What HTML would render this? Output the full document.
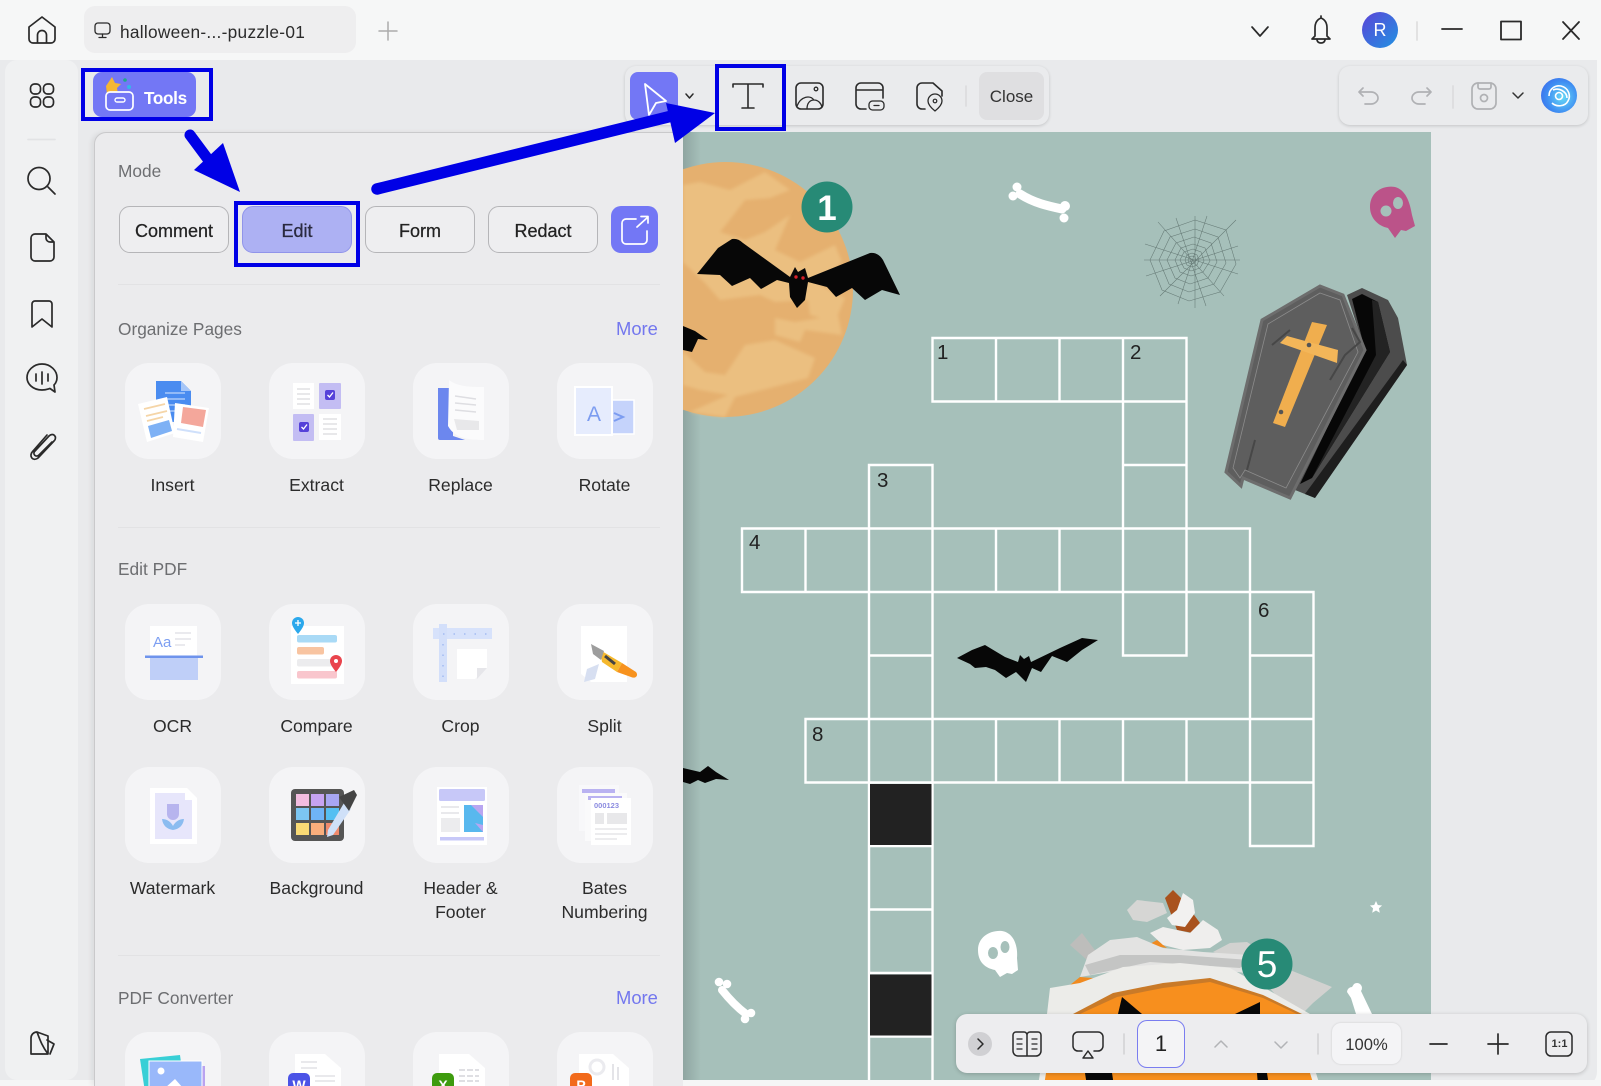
<!DOCTYPE html>
<html lang="en"><head><meta charset="utf-8"><title>Halloween puzzle</title>
<style>
html,body{margin:0;padding:0;background:#f6f7f7;width:1601px;height:1086px;overflow:hidden}
#r{position:absolute;left:0;top:0;width:1601px;height:1086px;overflow:hidden;font-family:"Liberation Sans",sans-serif;color:#222}
.a{position:absolute}
svg.a{overflow:visible}
.ic{fill:none;stroke:#2a2a2a;stroke-width:1.7;stroke-linecap:round;stroke-linejoin:round}
.btn{position:absolute;top:206px;width:110px;height:47px;box-sizing:border-box;border:1.5px solid #b5b5b8;border-radius:11px;text-align:center;line-height:48px;font-size:18px;color:#222;background:#eeeef0;-webkit-text-stroke:.25px #222}
.h{position:absolute;left:118px;font-size:17.3px;color:#6d6e71;line-height:22px}
.more{position:absolute;left:616px;font-size:18.4px;color:#7377ee;line-height:22px}
.card{position:absolute;width:96px;height:96px;border-radius:24px;background:#f4f4f6}
.card svg{position:absolute;left:0;top:0;overflow:visible}
.lb{position:absolute;width:144px;text-align:center;font-size:17.6px;line-height:24px;color:#2b2b2b}
.dv{position:absolute;left:118px;width:542px;height:1px;background:#e2e2e4}
</style></head><body><div id="r">

<!-- main area -->
<div class="a" style="left:0;top:60px;width:1597px;height:1026px;background:#e9eaec;border-radius:0 0 14px 0"></div>
<div class="a" style="left:5px;top:60px;width:73px;height:1020px;background:#f0f1f2;border-radius:12px"></div>
<div class="a" style="left:0;top:1080px;width:1601px;height:6px;background:#f5f6f6"></div>

<!-- PDF page -->
<svg class="a" style="left:0;top:0" width="1601" height="1086" viewBox="0 0 1601 1086">
<defs>
<clipPath id="pg"><rect x="683" y="132" width="748" height="948"/></clipPath>
<linearGradient id="sh" x1="0" x2="1" y1="0" y2="0"><stop offset="0" stop-color="#8fa5a1"/><stop offset="1" stop-color="#a6c0ba"/></linearGradient>
<filter id="bl"><feGaussianBlur stdDeviation="1.6"/></filter>
</defs>
<g clip-path="url(#pg)">
<rect x="683" y="132" width="748" height="948" fill="#a6c0ba"/>
<rect x="683" y="132" width="18" height="948" fill="url(#sh)"/>
<!-- moon -->
<circle cx="725.5" cy="289.5" r="127.5" fill="#e5b06f"/>
<g fill="#ebbf80" filter="url(#bl)">
<path d="M683 185 L700 182 L730 190 L765 172 L790 190 L770 198 L745 200 L728 222 L720 232 L745 240 L765 232 L790 215 L775 250 L800 262 L835 245 L842 262 L820 285 L845 298 L835 322 L810 315 L808 300 L775 302 L760 295 L720 300 L705 283 L683 262Z"/>
<path d="M775 318 L795 322 L838 315 L842 335 L805 330 L800 342 L775 335Z"/>
<path d="M683 352 L705 372 L725 375 L745 345 L775 340 L815 358 L808 378 L770 388 L735 397 L725 417 L690 412 L728 395 L700 390 L683 385Z"/>
</g>
<!-- bats -->
<path d="M697 274 L718 248 L732 239 Q738 238 743 243 L790 277 L795 267 L798 272 L805 268 L808 278 L870 253 Q878 252 883 260 L900 295 L882 290 L865 300 L852 288 L836 297 L827 287 L808 282 L805 300 L797 308 L790 297 L789 283 L777 280 L761 289 L750 278 L732 286 L720 275Z" fill="#070707"/>
<circle cx="796" cy="277" r="1.7" fill="#d9202a"/><circle cx="803" cy="278" r="1.7" fill="#d9202a"/>
<path d="M683 326 L695 331 L708 340 L698 339 L692 352 L683 350Z" fill="#070707"/>
<path d="M957 658 L972 650 L985 645 L1005 657 L1018 662 L1020 655 L1024 659 L1029 656 L1031 662 L1060 648 L1082 638 L1098 640 L1082 650 L1067 662 L1052 656 L1041 672 L1032 668 L1026 682 L1016 672 L1006 678 L995 670 L986 667 L975 668 L970 664Z" fill="#070707"/>
<path d="M683 768 L700 772 L708 766 L716 772 L729 780 L716 779 L705 783 L698 780 L690 784 L683 782Z" fill="#070707"/>
<!-- crossword -->
<path fill="none" stroke="#fff" stroke-width="2.4" d="
M932.5 338h63.5v63.5h-63.5z M996 338h63.5v63.5h-63.5z M1059.5 338h63.5v63.5h-63.5z M1123 338h63.5v63.5h-63.5z
M1123 401.5h63.5v63.5h-63.5z
M869 465h63.5v63.5h-63.5z M1123 465h63.5v63.5h-63.5z
M742 528.5h63.5v63.5h-63.5z M805.5 528.5h63.5v63.5h-63.5z M869 528.5h63.5v63.5h-63.5z M932.5 528.5h63.5v63.5h-63.5z M996 528.5h63.5v63.5h-63.5z M1059.5 528.5h63.5v63.5h-63.5z M1123 528.5h63.5v63.5h-63.5z M1186.5 528.5h63.5v63.5h-63.5z
M869 592h63.5v63.5h-63.5z M1123 592h63.5v63.5h-63.5z M1250 592h63.5v63.5h-63.5z
M869 655.5h63.5v63.5h-63.5z M1250 655.5h63.5v63.5h-63.5z
M805.5 719h63.5v63.5h-63.5z M869 719h63.5v63.5h-63.5z M932.5 719h63.5v63.5h-63.5z M996 719h63.5v63.5h-63.5z M1059.5 719h63.5v63.5h-63.5z M1123 719h63.5v63.5h-63.5z M1186.5 719h63.5v63.5h-63.5z M1250 719h63.5v63.5h-63.5z
M1250 782.5h63.5v63.5h-63.5z
M869 782.5h63.5v63.5h-63.5z M869 846h63.5v63.5h-63.5z M869 909.5h63.5v63.5h-63.5z M869 973h63.5v63.5h-63.5z M869 1036.5h63.5v63.5h-63.5z"/>
<rect x="870" y="784" width="61.5" height="61" fill="#222"/>
<rect x="870" y="974.5" width="61.5" height="61" fill="#222"/>
<g font-family="Liberation Sans,sans-serif" font-size="20.5" fill="#222">
<text x="937" y="359">1</text><text x="1130" y="359">2</text><text x="877" y="487">3</text>
<text x="749" y="549">4</text><text x="1258" y="617">6</text><text x="812" y="741">8</text>
</g>
<!-- bones -->
<g fill="#fff"><path d="M1020 194 C1034 203 1048 206 1062 209" fill="none" stroke="#fff" stroke-width="9" stroke-linecap="round"/><circle cx="1017" cy="187" r="4.500"/><circle cx="1013" cy="196" r="4.500"/><circle cx="1065" cy="206" r="5"/><circle cx="1064" cy="218" r="4.500"/></g>
<g fill="#fff"><path d="M722 990 C730 1000 738 1008 746 1014" fill="none" stroke="#fff" stroke-width="8" stroke-linecap="round"/><circle cx="719" cy="982" r="4.300"/><circle cx="727" cy="984" r="4.300"/><circle cx="751" cy="1013" r="4.300"/><circle cx="745" cy="1019" r="4.300"/></g>
<path d="M1347 992 a5 5 0 0 1 5 -5 l2 -3 a5 5 0 0 1 7 7 L1372 1014 L1356 1014 L1351 998Z" fill="#fff"/>
<!-- pink skull -->
<path d="M1370 207 C1370 192 1383 185 1395 187 C1406 190 1410 203 1412 215 L1415 226 L1406 231 L1401 230 L1395 238 L1388 228 C1378 226 1370 218 1370 207Z" fill="#bb5389"/>
<ellipse cx="1386" cy="211" rx="5.500" ry="5.500" fill="#a6c0ba"/><ellipse cx="1398" cy="203" rx="5" ry="6" fill="#a6c0ba"/>
<!-- web -->
<g fill="none" stroke="#667a76" stroke-width="0.55" transform="translate(1192 260)">
<path d="M-48 0H48M3 -44V48M-34 -38L32 36M-32 36L44 -40M-47 -16L46 14M-16 -42L14 46M-46 16L46 -14M-14 44L15 -44"/>
<path d="M3 -40L34 -30L44 4L28 32L-3 41L-30 30L-42 0L-28 -29Z"/>
<path d="M3 -31L26 -23L34 3L22 24L-3 32L-23 24L-33 0L-22 -23Z"/>
<path d="M2 -23L19 -17L25 2L16 18L-2 24L-17 18L-25 0L-16 -17Z"/>
<path d="M1 -16L13 -12L18 1L11 12L-1 16L-12 12L-17 0L-11 -12Z"/>
<path d="M1 -11L9 -8L12 1L8 8L-1 11L-8 8L-12 0L-8 -8Z"/>
<path d="M0 -7L5 -5L7 0L5 5L0 7L-5 5L-7 0L-5 -5Z"/>
<path d="M0 -4L3 -3L4 0L3 3L0 4L-3 3L-4 0L-3 -3Z"/>
</g>
<!-- coffin -->
<path d="M1347 295 L1362 288 L1388 300 L1398 318 L1407 365 L1315 498 L1295 490 L1365 350Z" fill="#4c4c4c"/>
<path d="M1352 299 L1362 294 L1378 302 L1390 352 L1312 478 L1300 484 L1365 350Z" fill="#070707"/>
<path d="M1372 300 L1378 302 L1390 352 L1312 478 L1376 355Z" fill="#232323"/>
<path d="M1403 360 L1407 365 L1315 498 L1305 494Z" fill="#1e1e1e"/>
<path d="M1320 286 L1343 295 L1365 350 L1290 498 L1243 478 L1241 486 L1226 472 L1262 320Z" fill="#5e5e5e"/>
<path d="M1320 286 L1343 295 L1365 350 L1290 498 L1243 478 L1241 486 L1226 472 L1262 320Z" fill="none" stroke="#6d6d6d" stroke-width="3"/>
<path d="M1320 293 L1340 300 L1358 352 L1286 488 L1245 470 L1240 478 L1233 468 L1268 324Z" fill="none" stroke="#8c8c8c" stroke-width="0.800"/>
<path d="M1352 328 L1360 342 L1345 355 L1330 380M1290 330 L1272 345M1255 440 L1247 470" fill="none" stroke="#474747" stroke-width="2"/>
<path d="M1312 322L1327 325L1285 427L1273 423Z" fill="#f0ae4e"/>
<path d="M1287 336L1338 350L1337 363L1280 343Z" fill="#f3b659"/>
<circle cx="1309" cy="345" r="2.300" fill="#555"/><circle cx="1281" cy="412" r="2.300" fill="#555"/>
<!-- white skull + star -->
<path d="M978 950 C978 937 990 930 1002 931 C1014 933 1018 946 1017 958 L1018 970 L1012 974 L1007 973 L1000 977 L995 970 C985 968 978 962 978 950Z" fill="#fff"/>
<ellipse cx="993" cy="953" rx="5" ry="6" fill="#a6c0ba"/><ellipse cx="1005" cy="947" rx="4.500" ry="6" fill="#a6c0ba"/>
<path d="M1376 901l1.800 4 4.300.5-3.200 2.900.9 4.300-3.800-2.200-3.800 2.200.9-4.300-3.200-2.900 4.300-.5z" fill="#fff"/>
<!-- pumpkin -->
<path d="M1070 945L1082 933L1097 953L1087 960Z" fill="#bdbdbb"/>
<path d="M1213 952L1230 943L1247 942L1290 970L1332 987L1313 1003L1303 1013L1280 1000L1250 965Z" fill="#d2d2d0"/>
<path d="M1070 985L1080 977L1093 978L1080 990Z M1148 945L1157 940L1167 948Z" fill="#f08a20"/>
<path d="M1080 977L1088 955L1110 940L1137 937L1163 948L1203 952L1250 955L1262 975L1180 965L1110 972Z" fill="#e3e3e2"/>
<path d="M1085 965L1120 955L1180 955L1250 960L1240 968L1150 962L1090 975Z" fill="#c4c5c4"/>
<path d="M1047 1014L1050 988L1080 983L1123 967L1180 963L1230 968L1263 987L1310 1014Z" fill="#ecece9"/>
<path d="M1073 1014L1113 993L1163 983L1210 978L1263 995L1302 1014Z" fill="#c97a28"/>
<path d="M1080 1014L1117 997L1163 988L1210 982L1263 998L1297 1014Z" fill="#f78f1e"/>
<path d="M1118 1014L1122 997L1142 1014Z M1235 1014L1260 1002L1260 1014Z" fill="#080808"/>
<path d="M1040 1073L1316 1073L1320 1086L1038 1086Z" fill="#ecece9"/>
<path d="M1046 1073L1310 1073L1314 1086L1044 1086Z" fill="#f78f1e"/>
<path d="M1085 1073L1112 1073L1114 1086L1087 1086Z M1257 1073L1267 1073L1269 1086L1258 1086Z" fill="#080808"/>
<path d="M1127 910L1137 900L1163 903L1167 913L1147 922L1133 920Z" fill="#d6d6d4"/>
<path d="M1165 898L1173 890L1183 900L1200 923L1193 933L1177 930Z" fill="#a9521d"/>
<path d="M1183 893L1193 900L1195 913L1185 927L1172 925L1167 918L1177 910Z" fill="#f2f1f0"/>
<path d="M1150 933L1163 927L1177 930L1190 933L1203 920L1218 930L1222 940L1210 948L1183 950L1163 945Z" fill="#efeeed"/>
<!-- badges -->
<circle cx="827" cy="207" r="25.500" fill="#278a76"/>
<text x="827" y="220" text-anchor="middle" font-family="Liberation Sans,sans-serif" font-weight="bold" font-size="35" fill="#fff">1</text>
<circle cx="1267" cy="964" r="25.500" fill="#278a76"/>
<text x="1267" y="977" text-anchor="middle" font-family="Liberation Sans,sans-serif" font-size="37" fill="#fff">5</text>
</g>
</svg>

<!-- left rail icons -->
<svg class="a ic" style="left:0;top:0" width="90" height="1086">
<path d="M29 27 L42 17 L55 27 V39 a4 4 0 0 1-4 4 H33 a4 4 0 0 1-4-4 Z M37.500 43 V35 a4.500 4.500 0 0 1 9 0 V43"/>
<rect x="30.500" y="84" width="10" height="10" rx="4"/><rect x="43.500" y="84" width="10" height="10" rx="4"/><rect x="30.500" y="97" width="10" height="10" rx="4"/><rect x="43.500" y="97" width="10" height="10" rx="4"/>
<path d="M28 139.500H55" stroke="#e2e3e5"/>
<circle cx="39" cy="178.500" r="11"/><path d="M48 187L55 194"/>
<path d="M35 234H46L54 242V257a4 4 0 0 1-4 4H35a4 4 0 0 1-4-4V238a4 4 0 0 1 4-4Z M46 234V238a4 4 0 0 0 4 4H54"/>
<path d="M35 301H49a3 3 0 0 1 3 3V327L42 319L32 327V304a3 3 0 0 1 3-3Z"/>
<path d="M42 364C33 364 27 371 27 377.500C27 384 33 390 42 390C46 390 48 389 50 388.500L55 392L54 385C56 383 57 380 57 377.500C57 371 51 364 42 364Z M36 374V381M42 372V384M48 374V381"/>
<path d="M52 442L39 455C36 458 32 454 35 451L49 436C53 432 58 437 54 441L38 458C33 462 28 456 33 451L47 435"/>
<path d="M31 1054V1038a6 6 0 0 1 6-6 L48 1036 V1054 Z M37 1032 C40 1040 42 1046 48 1054 M47 1040 L54 1044 L50 1054" />
</svg>

<!-- tab -->
<div class="a" style="left:84px;top:6px;width:272px;height:47px;background:#eeeeef;border-radius:11px"></div>
<svg class="a ic" style="left:0;top:0" width="420" height="60"><rect x="95" y="23" width="15" height="11" rx="3" stroke-width="1.300"/><path d="M102.500 34V37M99 37.500H106" stroke-width="1.300"/><path d="M388 22V40M379 31H397" stroke="#acacac" stroke-width="1.500"/></svg>
<div class="a" style="left:120px;top:20px;font-size:17.3px;line-height:24px;color:#2b2b2b;white-space:nowrap;letter-spacing:.28px">halloween-...-puzzle-01</div>

<!-- title bar right -->
<svg class="a ic" style="left:1240px;top:0" width="361" height="60">
<path d="M12 27L20 36L28 27"/>
<path d="M81 16V18C76 20 75 24 75 28V36L72 39H90L87 36V28C87 24 86 20 81 18V16M77 40C78 44 84 44 85 40"/>
<path d="M177 22V40" stroke="#dedede"/>
<path d="M202 29H222" stroke-width="1.800"/>
<rect x="261" y="21.500" width="20" height="18" stroke-width="1.800"/>
<path d="M323 22L339 39M339 22L323 39" stroke-width="1.800"/>
</svg>
<div class="a" style="left:1362px;top:12px;width:36px;height:36px;border-radius:50%;background:linear-gradient(135deg,#5a44d8,#2a87e0 85%);color:#fff;text-align:center;line-height:36px;font-size:18px">R</div>

<!-- top groups -->
<div class="a" style="left:625px;top:66px;width:424px;height:59px;box-sizing:border-box;border-radius:11px;background:#eaebed;box-shadow:0 1px 3px rgba(0,0,0,.16)"></div>
<div class="a" style="left:630px;top:72px;width:48px;height:48px;border-radius:8px;background:#7377f5"></div>
<svg class="a" style="left:630px;top:72px" width="48" height="48" fill="none" stroke="#fff" stroke-width="1.800" stroke-linejoin="round"><path d="M15 12L36 29L26 31L19 43Z"/></svg>
<svg class="a ic" style="left:670px;top:60px" width="330" height="70">
<path d="M16 34L19.500 38L23 34" stroke-width="1.500"/>
<path d="M63 27V24H93V27M78 24V48M72 48H84" stroke-width="1.600"/>
<rect x="126" y="23" width="27" height="26" rx="5" stroke-width="1.600"/><circle cx="146" cy="29" r="1.800" stroke-width="1.300"/><path d="M127 46C131 36 140 35 144 40C148 40 151 43 152 47M137 49C137 43 140 40 144 40" stroke-width="1.300"/>
<path d="M186 44V28a5 5 0 0 1 5-5H208a5 5 0 0 1 5 5V38M186 30H213M186 44a5 5 0 0 0 5 5H196" stroke-width="1.600"/><rect x="199" y="41" width="15" height="9" rx="3.500" stroke-width="1.300"/><path d="M204 45.500H209" stroke-width="1.300"/>
<path d="M247 44V28a5 5 0 0 1 5-5H263L272 31V36M247 44a5 5 0 0 0 5 5H255" stroke-width="1.600"/><path d="M265 51C260 47 258 44 258 41a7 7 0 0 1 14 0C272 44 270 47 265 51Z" stroke-width="1.300"/><circle cx="265" cy="41" r="1.800" stroke-width="1.200"/>
<path d="M296 26V46" stroke="#d9d9db" stroke-width="1.500"/>
</svg>
<div class="a" style="left:979px;top:72px;width:65px;height:48px;border-radius:8px;background:#dfdfe1;text-align:center;line-height:50px;font-size:17px;color:#333">Close</div>

<div class="a" style="left:1339px;top:66px;width:249px;height:59px;border-radius:11px;background:#eaebed;box-shadow:0 1px 3px rgba(0,0,0,.16)"></div>
<svg class="a ic" style="left:1340px;top:66px;stroke:#b0b1b4" width="250" height="60">
<path d="M23 22L19 26L23 30M19 26H31C35 26 38 29 38 32C38 35 35 38 31 38H25"/>
<path d="M87 22L91 26L87 30M91 26H79C75 26 72 29 72 32C72 35 75 38 79 38H85"/>
<path d="M113 20V42" stroke="#dcdcde"/>
<rect x="132" y="17" width="24" height="26" rx="6"/><path d="M138 17V21a2 2 0 0 0 2 2H149a2 2 0 0 0 2-2V17"/><circle cx="144" cy="32" r="3.500"/>
<path d="M173 27L178 32L183 27" stroke="#333" stroke-width="1.500"/>
</svg>
<div class="a" style="left:1541px;top:78px;width:36px;height:35px;border-radius:50%;background:radial-gradient(circle at 60% 55%,#67d9f6,#3e8cf2 55%,#3a5be8)"></div>
<svg class="a" style="left:1541px;top:78px" width="36" height="36" fill="none" stroke="#fff" stroke-width="1.600"><path d="M8 18C8 10 15 7 20 8C28 10 30 18 27 23C24 29 15 29 11 25"/><path d="M12 12C18 9 26 14 26 20"/><circle cx="18" cy="18" r="3.500"/></svg>

<!-- tools button -->
<div class="a" style="left:93px;top:72px;width:103px;height:45px;border-radius:9px;background:#7377f5"></div>
<svg class="a" style="left:93px;top:72px" width="103" height="45">
<path d="M19 5L22 11L28 12L24 16L25 22H14L13 14Z" fill="#f5b733"/><circle cx="32" cy="8" r="1.800" fill="#1fa98c"/><circle cx="36" cy="15" r="2" fill="#35b7e8"/>
<rect x="13" y="20" width="27" height="18" rx="4" fill="#7377f5" stroke="#fff" stroke-width="1.700"/><rect x="22" y="26" width="10" height="4" rx="2" fill="none" stroke="#fff" stroke-width="1.400"/></svg>
<div class="a" style="left:144px;top:85px;font-size:17.2px;font-weight:bold;line-height:26px;color:#fff;letter-spacing:-.35px">Tools</div>

<!-- panel -->
<div class="a" style="left:94px;top:132px;width:589px;height:954px;box-sizing:border-box;background:#ebebed;border:1.5px solid #c9c9cb;border-bottom:none;border-right:none;border-radius:12px 0 0 0;box-shadow:-3px 0 5px rgba(0,0,0,.06)"></div>

<div class="h" style="top:160px">Mode</div>
<div class="btn" style="left:119px">Comment</div>
<div class="btn" style="left:242px;background:#adb1f3;border-color:#9094ea;color:#2a2a44">Edit</div>
<div class="btn" style="left:365px">Form</div>
<div class="btn" style="left:488px">Redact</div>
<div class="a" style="left:611px;top:206px;width:47px;height:47px;border-radius:10px;background:#7377f5"></div>
<svg class="a" style="left:611px;top:206px" width="47" height="47" fill="none" stroke="#fff" stroke-width="1.700" stroke-linecap="round" stroke-linejoin="round"><path d="M25 13H15a4 4 0 0 0-4 4V34a4 4 0 0 0 4 4H32a4 4 0 0 0 4-4V25M26 21L37 11M30 10.500H37V17"/></svg>

<div class="dv" style="top:284px"></div>
<div class="h" style="top:318px">Organize Pages</div><div class="more" style="top:318px">More</div>

<!-- row 1 -->
<div class="card" style="left:124.5px;top:363px"><svg width="96" height="96">
<path d="M31 18H56L66 28V59H31Z" fill="#4a8cf0"/><path d="M56 18V28H66Z" fill="#a6c6f8"/><path d="M40 30H60M40 36H60M40 42H60M40 48H60" stroke="#a9caf9" stroke-width="1.500"/>
<path d="M50 40L84 45L78 79L48 74Z" fill="#fff"/><path d="M58 44L81 47L78 64L56 60Z" fill="#f4a79b"/><path d="M52 66L76 70" stroke="#cfe0fb" stroke-width="2"/>
<path d="M13 41L42 34L50 70L22 79Z" fill="#fff"/><path d="M19 46L40 41M21 53L42 48M22 58L38 54" stroke="#f5d5a7" stroke-width="1.800"/><path d="M23 63L44 57L47 68L26 75Z" fill="#7eb1f5"/>
</svg></div>
<div class="card" style="left:268.5px;top:363px"><svg width="96" height="96">
<rect x="24" y="20" width="21" height="26" fill="#fff"/><path d="M28 26H41M28 31H41M28 36H41M28 41H41" stroke="#e0e0e4" stroke-width="1.400"/>
<rect x="50" y="20" width="22" height="26" rx="1" fill="#c3bdf3"/><rect x="56" y="27" width="10" height="10" rx="2" fill="#5541d9"/><path d="M58.500 32L60.500 34L64 29.500" fill="none" stroke="#fff" stroke-width="1.300"/>
<rect x="24" y="51" width="21" height="27" rx="1" fill="#c3bdf3"/><rect x="30" y="59" width="10" height="10" rx="2" fill="#5541d9"/><path d="M32.500 64L34.500 66L38 61.500" fill="none" stroke="#fff" stroke-width="1.300"/>
<rect x="50" y="51" width="22" height="26" fill="#fff"/><path d="M54 56H68M54 61H68M54 66H68M54 71H68" stroke="#e0e0e4" stroke-width="1.400"/>
</svg></div>
<div class="card" style="left:412.5px;top:363px"><svg width="96" height="96">
<path d="M25 25H40V73L52 77H27a2 2 0 0 1-2-2Z" fill="#6c87ee"/>
<path d="M36 17C45 24 58 24 71 24V77C58 77 42 76 35 63Z" fill="#fbfbfc"/>
<path d="M42 33L63 36M42 40L63 42M42 47L63 49" stroke="#dedee2" stroke-width="1.400"/><path d="M41 56L66 58V67L44 67Z" fill="#e8e8ea"/>
</svg></div>
<div class="card" style="left:556.500px;top:363px"><svg width="96" height="96">
<rect x="55" y="37" width="22" height="34" fill="#c5d3fb" stroke="#fff" stroke-width="1.500"/>
<rect x="18" y="24" width="37" height="48" fill="#e6ecfd" stroke="#fff" stroke-width="2"/>
<text x="37" y="58" text-anchor="middle" font-family="Liberation Sans,sans-serif" font-size="21" fill="#7c9cf0">A</text>
<path d="M57 50L66 54L57 58" fill="none" stroke="#7c9cf0" stroke-width="2"/>
</svg></div>
<div class="lb" style="left:100.500px;top:473px">Insert</div><div class="lb" style="left:244.500px;top:473px">Extract</div><div class="lb" style="left:388.500px;top:473px">Replace</div><div class="lb" style="left:532.500px;top:473px">Rotate</div>

<div class="dv" style="top:527px"></div>
<div class="h" style="top:558px">Edit PDF</div>

<!-- row 2 -->
<div class="card" style="left:124.5px;top:604px"><svg width="96" height="96">
<rect x="25" y="22" width="47" height="30" fill="#fff"/><text x="28" y="43" font-family="Liberation Sans,sans-serif" font-size="15" fill="#7d9ff2">Aa</text><path d="M50 29H66M50 35H66M50 41H60" stroke="#e4e4e8" stroke-width="1.400"/>
<rect x="20" y="51.500" width="58" height="2.500" fill="#6e93ec"/><rect x="25" y="54" width="48" height="22" fill="#bfcff8"/>
</svg></div>
<div class="card" style="left:268.5px;top:604px"><svg width="96" height="96">
<rect x="22" y="22" width="53" height="58" fill="#fff"/><rect x="28" y="31" width="40" height="7.500" rx="2" fill="#a9daf6"/><rect x="28" y="43" width="27" height="7.500" rx="2" fill="#f8c4a1"/><rect x="28" y="55" width="40" height="7.500" rx="2" fill="#ececee"/><rect x="28" y="67" width="40" height="7.500" rx="2" fill="#f9c6cd"/>
<path d="M29 30C24 24 23 21 23 19a6 6 0 0 1 12 0C35 21 34 24 29 30Z" fill="#2ba8ec"/><path d="M26 19H32M29 16V22" stroke="#fff" stroke-width="1.300"/>
<path d="M67 68C62 62 61 59 61 57a6 6 0 0 1 12 0C73 59 72 62 67 68Z" fill="#e9444d"/><circle cx="67" cy="57" r="2" fill="#fff"/>
</svg></div>
<div class="card" style="left:412.5px;top:604px"><svg width="96" height="96">
<rect x="20" y="24" width="59" height="11" fill="#d7e2fb"/><rect x="26" y="20" width="8" height="58" fill="#d3dffa"/>
<path d="M30 30H75M30 40V74" stroke="#8aa8ee" stroke-width="1" stroke-dasharray="1.500 9"/>
<path d="M44 45H74V64L62 75H44Z" fill="#fff"/><path d="M74 64H64V75Z" fill="#e6e6ea"/>
</svg></div>
<div class="card" style="left:556.500px;top:604px"><svg width="96" height="96">
<path d="M24 22H70V78H34L24 70Z" fill="#fff"/><path d="M27 78L30 65L42 60L38 75Z" fill="#d7dff1"/>
<path d="M43 46L65 59L60 68L45 58Z" fill="#f5b82d"/><path d="M65 59L79 68C82 72 78 75 74 73L60 68Z" fill="#f7921e"/><path d="M34 40L47 47L44 56L36 50Z" fill="#9d9d9d"/><path d="M48 52L58 60" stroke="#444" stroke-width="3"/>
</svg></div>
<div class="lb" style="left:100.500px;top:714px">OCR</div><div class="lb" style="left:244.500px;top:714px">Compare</div><div class="lb" style="left:388.500px;top:714px">Crop</div><div class="lb" style="left:532.500px;top:714px">Split</div>

<!-- row 3 -->
<div class="card" style="left:124.5px;top:767px"><svg width="96" height="96">
<path d="M25 21H62L72 31V77H25Z" fill="#fff"/><path d="M30 26H60V33H67V72H30Z" fill="#e7e6fb"/>
<path d="M42 37H54V47a6 6 0 0 1-12 0Z" fill="#b7b4ee"/><path d="M37 52C38 59 42 62 48 63C54 62 58 59 59 52C54 52 50 55 48 59C46 55 42 52 37 52Z" fill="#8bbcf0"/>
</svg></div>
<div class="card" style="left:268.5px;top:767px"><svg width="96" height="96">
<rect x="22" y="22" width="53" height="52" rx="4" fill="#555"/>
<rect x="27" y="27" width="13" height="12" fill="#f3bde0"/><rect x="42" y="27" width="13" height="12" fill="#c6a3f2"/><rect x="57" y="27" width="13" height="12" fill="#a7a6f3"/>
<rect x="27" y="41" width="13" height="12" fill="#7cc6f2"/><rect x="42" y="41" width="13" height="12" fill="#6fb4f7"/><rect x="57" y="41" width="13" height="12" fill="#55bff2"/>
<rect x="27" y="56" width="13" height="12" fill="#f9da75"/><rect x="42" y="56" width="13" height="12" fill="#f9ae7c"/><rect x="57" y="56" width="13" height="12" fill="#ef8a6c"/>
<path d="M75 36L82 42L64 68L58 70L59 63Z" fill="#cfe0f8"/><path d="M70 30L85 23L88 28L80 44Z" fill="#444"/>
</svg></div>
<div class="card" style="left:412.5px;top:767px"><svg width="96" height="96">
<rect x="24" y="20" width="50" height="58" fill="#fff"/><rect x="26" y="22" width="46" height="12" rx="1.500" fill="#c7c8f8"/>
<path d="M28 40H46M28 46H46" stroke="#e2e2e6" stroke-width="1.500"/><rect x="28" y="51" width="19" height="14" fill="#ececee"/>
<path d="M51 38H70V65H51Z" fill="#58b8ee"/><path d="M70 50L58 38H70ZM70 65L62 56L70 58Z" fill="#b9a6f1"/>
<rect x="27" y="70" width="44" height="3.500" fill="#c7c8f8"/>
</svg></div>
<div class="card" style="left:556.500px;top:767px"><svg width="96" height="96">
<rect x="22" y="18" width="40" height="46" fill="#f8f8fa"/><rect x="25" y="22" width="33" height="4" fill="#b9b2f1"/>
<rect x="28" y="26" width="42" height="48" fill="#fafafb"/><rect x="31" y="29" width="34" height="4" fill="#b9b2f1"/>
<rect x="34" y="31" width="40" height="47" fill="#fff"/>
<text x="37" y="41" font-family="Liberation Sans,sans-serif" font-size="7.500" font-weight="bold" fill="#8b8be0">000123</text>
<rect x="38" y="46" width="9" height="11" fill="#e8e8ea"/><rect x="50" y="46" width="20" height="11" fill="#e8e8ea"/><path d="M38 62H70M38 67H70M38 72H60" stroke="#e6e6e9" stroke-width="1.500"/>
</svg></div>
<div class="lb" style="left:100.500px;top:876px">Watermark</div><div class="lb" style="left:244.500px;top:876px">Background</div><div class="lb" style="left:388.500px;top:876px">Header &amp;<br>Footer</div><div class="lb" style="left:532.500px;top:876px">Bates<br>Numbering</div>

<div class="dv" style="top:955px"></div>
<div class="h" style="top:987px">PDF Converter</div><div class="more" style="top:987px">More</div>

<!-- row 4 -->
<div class="card" style="left:124.5px;top:1032px"><svg width="96" height="96">
<path d="M15 27L55 23L60 60H20Z" fill="#38cfd6"/><rect x="58" y="34" width="22" height="30" fill="#b9a3f0"/>
<rect x="24" y="29" width="53" height="40" fill="#99b8fa" stroke="#fff" stroke-width="1"/><circle cx="36" cy="39" r="3.500" fill="#fff"/><path d="M40 56L50 47L58 56Z" fill="#fff"/></svg></div>
<div class="card" style="left:268.5px;top:1032px"><svg width="96" height="96">
<path d="M26 22H56L72 36V70H26Z" fill="#fff"/><path d="M32 30H48M32 36H48M46 44H66M46 49H66" stroke="#e2e2e6" stroke-width="1.500"/><rect x="19" y="41" width="22" height="24" rx="5" fill="#4b53e6"/><text x="30" y="58" text-anchor="middle" font-family="Liberation Sans,sans-serif" font-weight="bold" font-size="14" fill="#fff">W</text></svg></div>
<div class="card" style="left:412.5px;top:1032px"><svg width="96" height="96">
<path d="M26 22H56L72 36V70H26Z" fill="#fff"/><path d="M46 38H66M46 44H66M46 49H66" stroke="#dfdfe3" stroke-width="2" stroke-dasharray="6 2"/><rect x="19" y="41" width="22" height="24" rx="5" fill="#3e9b0e"/><text x="30" y="58" text-anchor="middle" font-family="Liberation Sans,sans-serif" font-weight="bold" font-size="14" fill="#fff">X</text></svg></div>
<div class="card" style="left:556.500px;top:1032px"><svg width="96" height="96">
<path d="M22 22H56L72 36V70H22Z" fill="#fff"/><circle cx="40" cy="35" r="7" fill="none" stroke="#ebebef" stroke-width="3"/><path d="M56 32V48M61 35V48" stroke="#e4e4e8" stroke-width="2"/><rect x="13" y="41" width="22" height="24" rx="5" fill="#f26a1b"/><text x="24" y="58" text-anchor="middle" font-family="Liberation Sans,sans-serif" font-weight="bold" font-size="14" fill="#fff">P</text></svg></div>

<!-- bottom toolbar -->
<div class="a" style="left:956px;top:1014px;width:631px;height:59px;border-radius:11px;background:#ededef;box-shadow:0 1px 4px rgba(0,0,0,.2)"></div>
<div class="a" style="left:968px;top:1032px;width:24px;height:24px;border-radius:50%;background:#d0d0d3"></div>
<svg class="a ic" style="left:956px;top:1014px" width="631" height="59">
<path d="M22 25L27 30L22 35" stroke-width="1.500"/>
<path d="M60 18H68a3 3 0 0 1 3 3V42H62a5 5 0 0 1-5-5V21a3 3 0 0 1 3-3Z M71 21a3 3 0 0 1 3-3H82a3 3 0 0 1 3 3V37a5 5 0 0 1-5 5H71" stroke-width="1.500"/>
<path d="M61 25H66M61 30H66M61 35H66M76 25H81M76 30H81M76 35H81" stroke-width="1.300"/>
<path d="M122 37a5 5 0 0 1-5-5V23a5 5 0 0 1 5-5H142a5 5 0 0 1 5 5V32a5 5 0 0 1-5 5H138M126 37H122M132 37L127 44H137Z" stroke-width="1.500"/>
<path d="M168 20V40M362 20V40" stroke="#cfcfd1" stroke-width="1.400"/>
<path d="M259 33L265 27L271 33M319 28L325 34L331 28" stroke="#b2b3b6" stroke-width="1.500"/>
<path d="M474 30H491M532 30H552M542 20V40" stroke-width="1.700"/>
<rect x="590" y="18" width="26" height="24" rx="5" stroke-width="1.500"/>
</svg>
<div class="a" style="left:1137px;top:1020px;width:48px;height:48px;box-sizing:border-box;border:1.5px solid #7a7df0;border-radius:10px;background:#f4f4f6;text-align:center;line-height:46px;font-size:22px;color:#222">1</div>
<div class="a" style="left:1332px;top:1023px;width:69px;height:41px;border-radius:9px;background:#f4f4f6;box-shadow:0 0 2px rgba(0,0,0,.15);text-align:center;line-height:43px;font-size:16.6px;color:#333">100%</div>
<div class="a" style="left:1546px;top:1031px;width:27px;height:27px;text-align:center;line-height:27px;font-size:11px;font-weight:bold;color:#333">1:1</div>

<!-- annotation arrows -->
<div class="a" style="left:81px;top:68px;width:132px;height:53px;box-sizing:border-box;border:4px solid #0000e6"></div>
<div class="a" style="left:234px;top:201px;width:126px;height:66px;box-sizing:border-box;border:4px solid #0000e6"></div>
<div class="a" style="left:715px;top:64px;width:71px;height:67px;box-sizing:border-box;border:4px solid #0000e6"></div>
<svg class="a" style="left:0;top:0" width="1601" height="1086">
<path d="M190 135L216 170" stroke="#0000e6" stroke-width="11" stroke-linecap="round"/>
<path d="M240 192L194 170L223 143Z" fill="#0000e6"/>
<path d="M377 189L680 114" stroke="#0000e6" stroke-width="11.500" stroke-linecap="round"/>
<path d="M715 113L666 103L675 143Z" fill="#0000e6"/>
</svg>
</div></body></html>
